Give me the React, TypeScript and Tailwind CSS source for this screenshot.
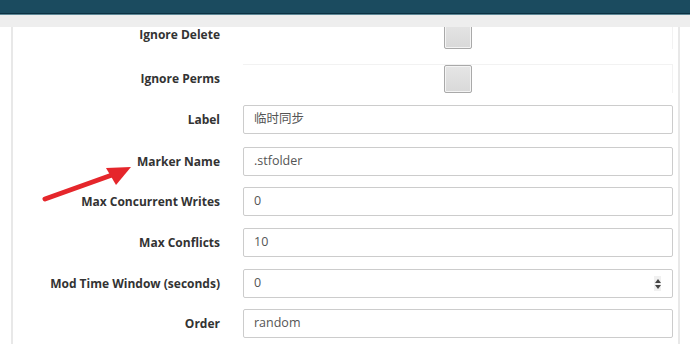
import React from 'react';

type Row = {
  label: string;
  value?: string;
  kind: 'check' | 'text' | 'number';
  mt: string;
};

const rows: Row[] = [
  { label: 'Ignore Delete', kind: 'check', mt: '-mt-[7px]' },
  { label: 'Ignore Perms', kind: 'check', mt: 'mt-[15px]' },
  { label: 'Label', value: '临时同步', kind: 'text', mt: 'mt-[12px]' },
  { label: 'Marker Name', value: '.stfolder', kind: 'text', mt: 'mt-[13px]' },
  { label: 'Max Concurrent Writes', value: '0', kind: 'text', mt: 'mt-[11px]' },
  { label: 'Max Conflicts', value: '10', kind: 'text', mt: 'mt-[12px]' },
  { label: 'Mod Time Window (seconds)', value: '0', kind: 'number', mt: 'mt-[12px]' },
  { label: 'Order', value: 'random', kind: 'text', mt: 'mt-[11px]' },
];

const Field: React.FC<{ row: Row }> = ({ row }) => {
  if (row.kind === 'check') {
    return (
      <div className="w-[430px] h-[29px] border-t border-r border-[#f2f2f2] flex items-center justify-center">
        <div className="w-[28px] h-[28px] rounded-[2px] border border-[#a9a9a9] bg-gradient-to-b from-[#e6e6e6] to-[#d9d9d9] shadow-[inset_0_0_0_1px_#f4f4f4]" />
      </div>
    );
  }
  return (
    <div className="w-[430px] h-[29px] rounded-[2px] border border-[#cccccc] bg-white flex items-center justify-between pl-[10px] pr-[11px] text-[12.5px] text-[#555555]">
      <span>{row.value}</span>
      {row.kind === 'number' && (
        <div className="w-[7px] h-[15px] bg-[#f0f0f0] flex flex-col items-center justify-center gap-[2px]">
          <div className="w-0 h-0 border-l-[3px] border-r-[3px] border-b-[4px] border-l-transparent border-r-transparent border-b-[#444]" />
          <div className="w-0 h-0 border-l-[3px] border-r-[3px] border-t-[4px] border-l-transparent border-r-transparent border-t-[#444]" />
        </div>
      )}
    </div>
  );
};

const App: React.FC = () => {
  return (
    <div className="relative w-[690px] h-[344px] bg-white overflow-hidden font-['Open_Sans','Noto_Sans_CJK_SC',sans-serif]">
      {/* top nav bar */}
      <div className="h-[13px] bg-[#1b4b5f]" />
      <div className="h-[1px] bg-[#0c3142]" />
      <div className="h-[1px] bg-[#5d8796]" />
      <div className="h-[12px] bg-[#eeeeee]" />

      <div className="flex h-[317px]">
        <div className="w-[11px]" />
        <div className="w-[2px] bg-[#e8e8e8]" />
        <div className="w-[665px] overflow-hidden">
          {rows.map((row) => (
            <div key={row.label} className={`flex items-center ${row.mt}`}>
              <div className="w-[207px] text-right font-bold text-[12px] leading-[14px] text-[#333333]">
                {row.label}
              </div>
              <div className="w-[23px]" />
              <Field row={row} />
            </div>
          ))}
        </div>
        <div className="w-[2px] bg-[#e8e8e8]" />
        <div className="flex-1" />
      </div>

      {/* annotation arrow */}
      <svg className="absolute left-0 top-0" width="690" height="344" viewBox="0 0 690 344">
        <line x1="45" y1="199" x2="112" y2="175" stroke="#e5262b" strokeWidth="5" strokeLinecap="round" />
        <polygon points="131,167 106,168 116,185" fill="#e5262b" />
      </svg>
    </div>
  );
};

export default App;
